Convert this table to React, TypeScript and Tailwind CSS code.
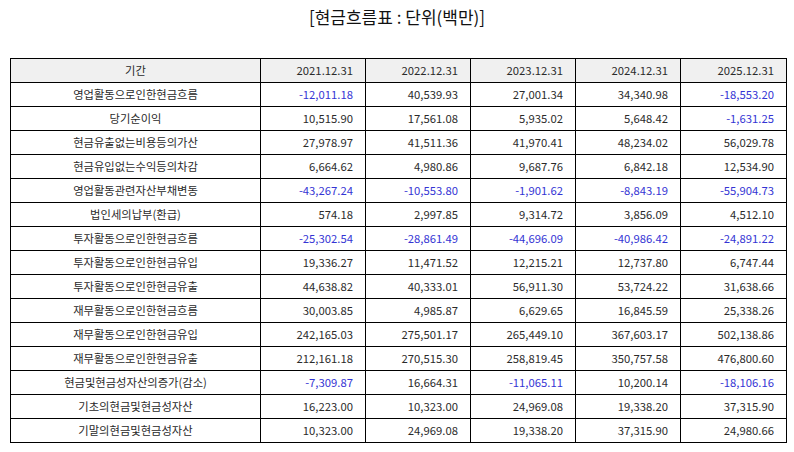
const FONT = "font-['Noto_Sans_CJK_KR','Noto_Sans',sans-serif]";

const YEARS = ["2021.12.31", "2022.12.31", "2023.12.31", "2024.12.31", "2025.12.31"];

const ROWS: [string, string[]][] = [
  ["영업활동으로인한현금흐름", ["-12,011.18", "40,539.93", "27,001.34", "34,340.98", "-18,553.20"]],
  ["당기순이익", ["10,515.90", "17,561.08", "5,935.02", "5,648.42", "-1,631.25"]],
  ["현금유출없는비용등의가산", ["27,978.97", "41,511.36", "41,970.41", "48,234.02", "56,029.78"]],
  ["현금유입없는수익등의차감", ["6,664.62", "4,980.86", "9,687.76", "6,842.18", "12,534.90"]],
  ["영업활동관련자산부채변동", ["-43,267.24", "-10,553.80", "-1,901.62", "-8,843.19", "-55,904.73"]],
  ["법인세의납부(환급)", ["574.18", "2,997.85", "9,314.72", "3,856.09", "4,512.10"]],
  ["투자활동으로인한현금흐름", ["-25,302.54", "-28,861.49", "-44,696.09", "-40,986.42", "-24,891.22"]],
  ["투자활동으로인한현금유입", ["19,336.27", "11,471.52", "12,215.21", "12,737.80", "6,747.44"]],
  ["투자활동으로인한현금유출", ["44,638.82", "40,333.01", "56,911.30", "53,724.22", "31,638.66"]],
  ["재무활동으로인한현금흐름", ["30,003.85", "4,985.87", "6,629.65", "16,845.59", "25,338.26"]],
  ["재무활동으로인한현금유입", ["242,165.03", "275,501.17", "265,449.10", "367,603.17", "502,138.86"]],
  ["재무활동으로인한현금유출", ["212,161.18", "270,515.30", "258,819.45", "350,757.58", "476,800.60"]],
  ["현금및현금성자산의증가(감소)", ["-7,309.87", "16,664.31", "-11,065.11", "10,200.14", "-18,106.16"]],
  ["기초의현금및현금성자산", ["16,223.00", "10,323.00", "24,969.08", "19,338.20", "37,315.90"]],
  ["기말의현금및현금성자산", ["10,323.00", "24,969.08", "19,338.20", "37,315.90", "24,980.66"]],
];

export default function App() {
  return (
    <div className={`w-[794px] h-[452px] bg-white ${FONT} text-[#2a2a2a]`}>
      <h1 className="pt-[5px] h-[58px] text-center text-[17px] leading-[24px] text-[#111]">
        [현금흐름표 : 단위(백만)]
      </h1>
      <table className="ml-[10px] w-[776px] border-collapse table-fixed text-[11.3px]">
        <colgroup>
          <col className="w-[250px]" />
          <col className="w-[105px]" />
          <col className="w-[105px]" />
          <col className="w-[105px]" />
          <col className="w-[105px]" />
          <col className="w-[106px]" />
        </colgroup>
        <thead>
          <tr className="h-[24px] bg-[#f0f0f0]">
            <th className="border border-black font-normal text-center">기간</th>
            {YEARS.map((y) => (
              <th key={y} className="border border-black font-normal text-right pr-[12px]">
                {y}
              </th>
            ))}
          </tr>
        </thead>
        <tbody>
          {ROWS.map(([label, values]) => (
            <tr key={label} className="h-[24px]">
              <td className="border border-black text-center">{label}</td>
              {values.map((v, i) => (
                <td
                  key={i}
                  className={`border border-black text-right pr-[12px] ${
                    v.startsWith("-") ? "text-[#3434d4]" : ""
                  }`}
                >
                  {v}
                </td>
              ))}
            </tr>
          ))}
        </tbody>
      </table>
    </div>
  );
}
